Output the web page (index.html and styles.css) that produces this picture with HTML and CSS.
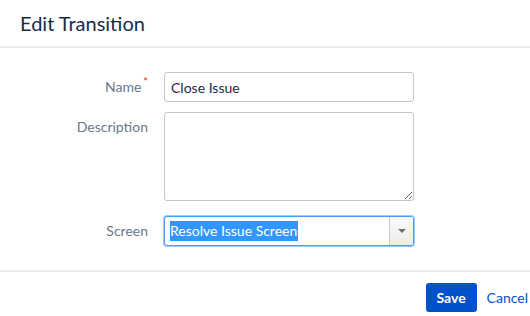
FILE: index.html
```html
<!DOCTYPE html>
<html lang="en">
<head>
    <meta charset="UTF-8">
    <title>Edit Transition</title>
    <link rel="stylesheet" href="styles.css">
</head>
<body>
    <div class="dialog">
        <div class="dialog-header">
            <h2>Edit Transition</h2>
        </div>

        <form class="dialog-content">
            <div class="field-row">
                <label for="name">Name<span class="required">*</span></label>
                <input type="text" id="name" value="Close Issue">
            </div>
            <div class="field-row row-desc">
                <label for="desc">Description</label>
                <textarea id="desc"></textarea>
            </div>
            <div class="field-row">
                <label>Screen</label>
                <div class="select">
                    <span class="select-value"><span class="selected-text">Resolve Issue Screen</span></span>
                    <span class="select-arrow"><span class="arrow"></span></span>
                </div>
            </div>
        </form>

        <div class="dialog-footer">
            <button type="button" class="btn-save">Save</button>
            <a href="#" class="cancel">Cancel</a>
        </div>
    </div>
</body>
</html>
```

FILE: styles.css
```css
body {
    margin: 0;
    background: #fff;
    color: #172b4d;
    font-family: Lato, "Noto Sans", sans-serif;
    font-size: 14px;
}

.dialog-header {
    height: 46px;
    padding: 0 20px;
    display: flex;
    align-items: center;
    border-bottom: 2px solid #ebecf0;
}

.dialog-header h2 {
    margin: 0;
    font-size: 20px;
    font-weight: 400;
    color: #172b4d;
}

.dialog-content {
    padding: 24px 0 24px 0;
    border-bottom: 2px solid #ebecf0;
}

.field-row {
    display: grid;
    grid-template-columns: 148px 250px;
    column-gap: 16px;
    margin-bottom: 9px;
}

.row-desc {
    margin-bottom: 15px;
}

.field-row:last-child {
    margin-bottom: 0;
}

label {
    text-align: right;
    line-height: 30px;
    color: #6b778c;
}

.required {
    color: #de350b;
    font-size: 11px;
    position: relative;
    top: -6px;
    margin-left: 2px;
}

input[type="text"], textarea {
    box-sizing: border-box;
    width: 250px;
    border: 1px solid #c1c7d0;
    border-radius: 3px;
    font-family: inherit;
    font-size: 14px;
    color: #172b4d;
    margin: 0;
}

input[type="text"] {
    height: 30px;
    padding: 0 6px;
}

textarea {
    display: block;
    height: 89px;
    padding: 4px 6px;
    resize: vertical;
}

.select {
    box-sizing: border-box;
    width: 250px;
    height: 30px;
    display: flex;
    border: 1px solid #4c9aff;
    border-radius: 3px;
    box-shadow: 0 0 0 1px #a3c8fb;
    background: #fff;
}

.select-value {
    flex: 1;
    display: flex;
    align-items: center;
    padding-left: 5px;
}

.selected-text {
    background: #3297fd;
    color: #fff;
    line-height: 20px;
    padding-right: 1px;
}

.select-arrow {
    width: 23px;
    border-left: 1px solid #c8c8c8;
    background: linear-gradient(#fafafa, #ececec);
    display: flex;
    align-items: center;
    justify-content: center;
    border-radius: 0 2px 2px 0;
}

.arrow {
    width: 0;
    height: 0;
    border-left: 4px solid transparent;
    border-right: 4px solid transparent;
    border-top: 4px solid #6f6f6f;
}

.dialog-footer {
    display: flex;
    justify-content: flex-end;
    align-items: center;
    padding: 11px 2px 0 0;
}

.btn-save {
    width: 51px;
    height: 29px;
    border: none;
    border-radius: 3px;
    background: #0052cc;
    color: #fff;
    font-family: inherit;
    font-size: 14px;
    font-weight: 700;
    padding: 0;
    margin-right: 10px;
}

.cancel {
    color: #0052cc;
    text-decoration: none;
}
```
